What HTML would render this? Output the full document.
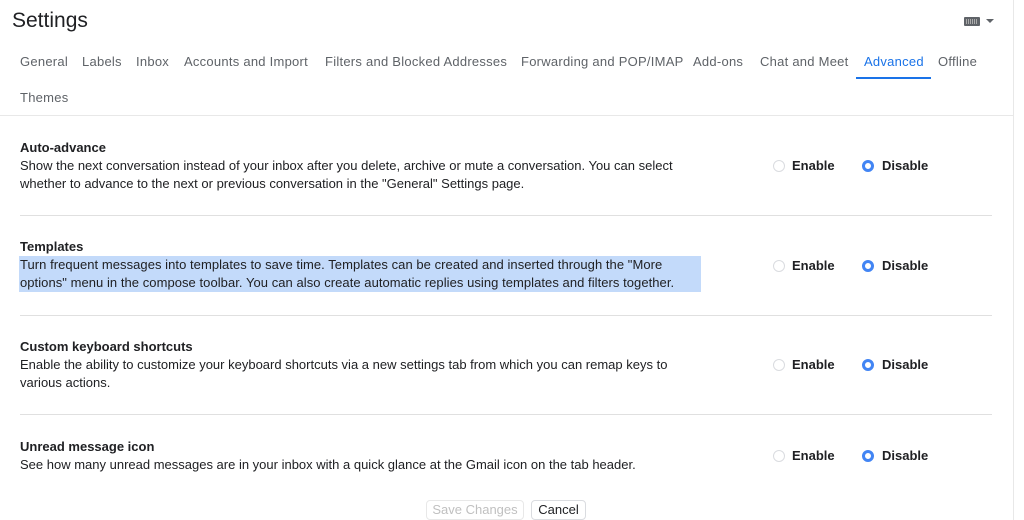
<!DOCTYPE html>
<html><head><meta charset="utf-8"><style>
body{margin:0;width:1024px;height:520px;background:#fff;font-family:"Liberation Sans",Arial,sans-serif;color:#202124;position:relative;overflow:hidden}
.a{position:absolute;white-space:nowrap}
.tab{position:absolute;top:54px;font-size:13px;color:#5f6368;letter-spacing:0.25px}
.h{font-size:13px;font-weight:bold;color:#202124}
.d{font-size:13px;line-height:18px;color:#202124}
.sep{position:absolute;left:20px;width:972px;height:1px;background:#e0e0e0}
.rad{position:absolute;width:12px;height:12px;border-radius:50%;border:1px solid #dadce0;box-sizing:border-box}
.on{border:3.5px solid #4285f4;background:#fff}
.lbl{position:absolute;font-size:13px;font-weight:bold;color:#202124}
</style></head><body>
<div style="position:absolute;left:1013px;top:0;width:1px;height:520px;background:#e8e8e8"></div>
<div class="a" style="left:12px;top:9px;font-size:21px;color:#202124">Settings</div>
<div class="a" style="left:964px;top:17px;width:16px;height:9px;background:#5f6368;border-radius:1px"></div>
<div class="a" style="left:966px;top:19px;width:12px;height:5px;background:repeating-linear-gradient(90deg,#aaa 0 1px,transparent 1px 2px)"></div>
<div class="a" style="left:986px;top:19px;width:0;height:0;border-left:4px solid transparent;border-right:4px solid transparent;border-top:4px solid #5f6368"></div>
<div class="tab" style="left:20px">General</div>
<div class="tab" style="left:82px">Labels</div>
<div class="tab" style="left:136px">Inbox</div>
<div class="tab" style="left:184px">Accounts and Import</div>
<div class="tab" style="left:325px">Filters and Blocked Addresses</div>
<div class="tab" style="left:521px">Forwarding and POP/IMAP</div>
<div class="tab" style="left:693px">Add-ons</div>
<div class="tab" style="left:760px">Chat and Meet</div>
<div class="tab" style="left:864px;color:#1a73e8">Advanced</div>
<div class="a" style="left:856px;top:77px;width:75px;height:2px;background:#1a73e8"></div>
<div class="tab" style="left:938px">Offline</div>
<div class="tab" style="left:20px;top:90px">Themes</div>
<div class="a" style="left:0;top:115px;width:1013px;height:1px;background:#e8e8e8"></div>

<div class="a h" style="left:20px;top:140px">Auto-advance</div>
<div class="a d" style="left:20px;top:157px">Show the next conversation instead of your inbox after you delete, archive or mute a conversation. You can select<br>whether to advance to the next or previous conversation in the "General" Settings page.</div>
<div class="sep" style="top:215px"></div>

<div class="a h" style="left:20px;top:239px">Templates</div>
<div class="a" style="left:19px;top:256px;width:682px;height:36px;background:#c3dafa"></div>
<div class="a d" style="left:20px;top:256px;letter-spacing:0.05px">Turn frequent messages into templates to save time. Templates can be created and inserted through the "More<br>options" menu in the compose toolbar. You can also create automatic replies using templates and filters together.</div>
<div class="sep" style="top:315px"></div>

<div class="a h" style="left:20px;top:339px">Custom keyboard shortcuts</div>
<div class="a d" style="left:20px;top:356px">Enable the ability to customize your keyboard shortcuts via a new settings tab from which you can remap keys to<br>various actions.</div>
<div class="sep" style="top:414px"></div>

<div class="a h" style="left:20px;top:439px">Unread message icon</div>
<div class="a d" style="left:20px;top:456px">See how many unread messages are in your inbox with a quick glance at the Gmail icon on the tab header.</div>

<div class="rad" style="left:773px;top:160px"></div><div class="lbl" style="left:792px;top:158px">Enable</div>
<div class="rad on" style="left:862px;top:160px"></div><div class="lbl" style="left:882px;top:158px">Disable</div>
<div class="rad" style="left:773px;top:260px"></div><div class="lbl" style="left:792px;top:258px">Enable</div>
<div class="rad on" style="left:862px;top:260px"></div><div class="lbl" style="left:882px;top:258px">Disable</div>
<div class="rad" style="left:773px;top:359px"></div><div class="lbl" style="left:792px;top:357px">Enable</div>
<div class="rad on" style="left:862px;top:359px"></div><div class="lbl" style="left:882px;top:357px">Disable</div>
<div class="rad" style="left:773px;top:450px"></div><div class="lbl" style="left:792px;top:448px">Enable</div>
<div class="rad on" style="left:862px;top:450px"></div><div class="lbl" style="left:882px;top:448px">Disable</div>

<div class="a" style="left:426px;top:500px;width:98px;height:20px;border:1px solid #e8e8e8;border-radius:4px;box-sizing:border-box;font-size:13px;color:#c0c0c0;text-align:center;line-height:18px">Save Changes</div>
<div class="a" style="left:531px;top:500px;width:55px;height:20px;border:1px solid #dadce0;border-radius:4px;box-sizing:border-box;font-size:13px;color:#202124;text-align:center;line-height:18px">Cancel</div>
</body></html>
